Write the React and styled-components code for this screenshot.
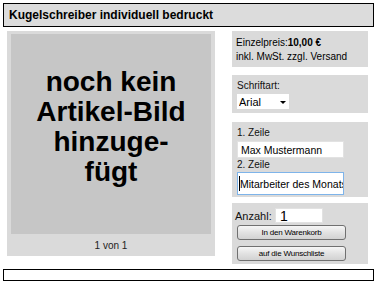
import React from 'react';
import styled, { createGlobalStyle } from 'styled-components';

const GlobalStyle = createGlobalStyle`
  body {
    margin: 0;
    font-family: "Liberation Sans", Arial, sans-serif;
    color: #000;
    background: #fff;
  }
`;

const Page = styled.div`
  padding: 3px 4px 3px 3px;
  width: 371px;
`;

const Header = styled.div`
  height: 22px;
  line-height: 22px;
  padding-left: 5px;
  border: 1px solid #000;
  background: #dcdcdc;
  font-size: 12px;
  font-weight: bold;
`;

const Main = styled.div`
  display: flex;
  align-items: flex-start;
  margin-top: 4px;
  padding-left: 4px;
`;

const ImagePanel = styled.div`
  width: 200px;
  height: 222px;
  padding: 3px 4px 0;
  background: #dadada;
`;

const Placeholder = styled.div`
  height: 167px;
  padding-top: 33px;
  background: #c6c6c6;
  text-align: center;
  font-size: 28px;
  line-height: 30px;
  font-weight: bold;
`;

const Caption = styled.div`
  height: 22px;
  line-height: 23px;
  text-align: center;
  font-size: 10px;
  color: #222;
`;

const Side = styled.div`
  display: flex;
  flex-direction: column;
  width: 136px;
  margin-left: 17px;
`;

const Panel = styled.div`
  box-sizing: border-box;
  height: ${({ $h }) => $h}px;
  margin-top: ${({ $top }) => $top || 0}px;
  padding: ${({ $pt }) => $pt}px 4px 0 ${({ $pl }) => $pl || 5}px;
  background: #dadada;
  font-size: 10px;
  line-height: 14px;
`;

const Label = styled.div`
  font-size: 10px;
  line-height: 14px;
  color: #111;
`;

const SelectWrap = styled.div`
  position: relative;
  width: 52px;
  height: 15px;
  margin-top: 1px;
`;

const Select = styled.select`
  appearance: none;
  box-sizing: border-box;
  width: 52px;
  height: 15px;
  border: none;
  padding: 0 0 0 2px;
  background: #fff;
  font-family: "Liberation Sans", Arial, sans-serif;
  font-size: 11px;
  color: #000;
  outline: none;
`;

const Arrow = styled.span`
  position: absolute;
  left: 43px;
  top: 7px;
  width: 0;
  height: 0;
  border-left: 3px solid transparent;
  border-right: 3px solid transparent;
  border-top: 3px solid #000;
  pointer-events: none;
`;

const TextField = styled.input`
  display: block;
  box-sizing: border-box;
  width: ${({ $w }) => $w || 107}px;
  height: ${({ $h }) => $h || 17}px;
  margin-top: ${({ $top }) => $top || 0}px;
  padding: 0 0 0 ${({ $pad }) => $pad || 3}px;
  border: 1px solid ${({ $focus }) => ($focus ? '#7eb4ea' : '#e2e2e2')};
  background: #fff;
  font-family: "Liberation Sans", Arial, sans-serif;
  font-size: ${({ $fs }) => $fs || 10.5}px;
  color: #000;
  outline: none;
`;

const FieldWrap = styled.div`
  position: relative;
`;

const Caret = styled.span`
  position: absolute;
  left: 2px;
  top: 4px;
  width: 1px;
  height: 15px;
  background: #000;
`;

const QtyRow = styled.div`
  display: flex;
  align-items: center;
  margin-top: 5px;
  margin-left: -2px;
  font-size: 11px;
`;

const QtyLabel = styled.span`
  width: 40px;
  color: #111;
`;

const Button = styled.button`
  display: block;
  box-sizing: border-box;
  width: 109px;
  height: 15px;
  margin-top: ${({ $top }) => $top}px;
  padding: 0;
  border: 1px solid #707070;
  border-radius: 3px;
  background: linear-gradient(#f6f6f6, #e2e2e2 50%, #d2d2d2);
  font-family: "Liberation Sans", Arial, sans-serif;
  font-size: 8px;
  letter-spacing: -0.2px;
  color: #000;
`;

const Footer = styled.div`
  height: 10px;
  margin-top: 5px;
  border: 1px solid #000;
`;

export default function App() {
  return (
    <>
      <GlobalStyle />
      <Page>
        <Header>Kugelschreiber individuell bedruckt</Header>
        <Main>
          <ImagePanel>
            <Placeholder>
              noch kein<br />Artikel-Bild<br />hinzuge-<br />fügt
            </Placeholder>
            <Caption>1 von 1</Caption>
          </ImagePanel>
          <Side>
            <Panel $h={36} $pt={5} $pl={4}>
              Einzelpreis:<b>10,00 €</b>
              <br />
              inkl. MwSt. zzgl. Versand
            </Panel>
            <Panel $h={38} $pt={4} $top={8}>
              <Label>Schriftart:</Label>
              <SelectWrap>
                <Select defaultValue="Arial">
                  <option>Arial</option>
                  <option>Times</option>
                </Select>
                <Arrow />
              </SelectWrap>
            </Panel>
            <Panel $h={75} $pt={4} $top={9}>
              <Label>1. Zeile</Label>
              <TextField $top={1} defaultValue="Max Mustermann" />
              <Label>2. Zeile</Label>
              <FieldWrap>
                <TextField $h={23} $pad={2} $focus defaultValue="Mitarbeiter des Monats" />
                <Caret />
              </FieldWrap>
            </Panel>
            <Panel $h={61} $pt={0} $top={6}>
              <QtyRow>
                <QtyLabel>Anzahl:</QtyLabel>
                <TextField $w={48} $h={15} $fs={14} $pad={4} defaultValue="1" />
              </QtyRow>
              <Button $top={2}>In den Warenkorb</Button>
              <Button $top={6}>auf die Wunschliste</Button>
            </Panel>
          </Side>
        </Main>
        <Footer />
      </Page>
    </>
  );
}
